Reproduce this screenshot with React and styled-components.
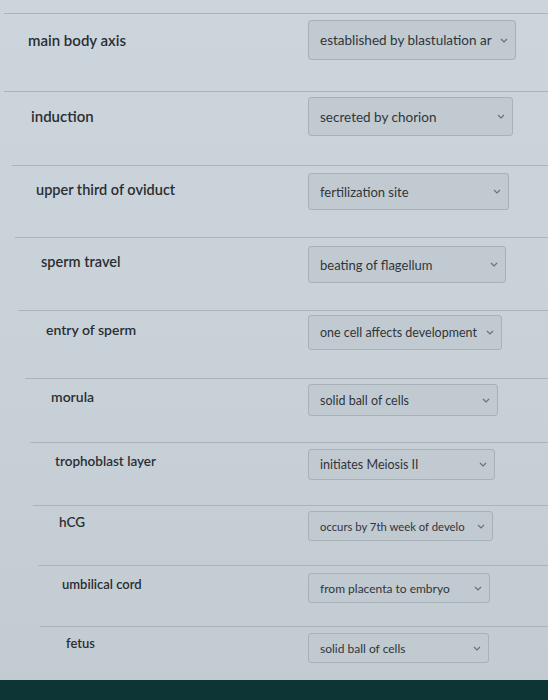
import React from "react";
import styled, { createGlobalStyle } from "styled-components";

const Global = createGlobalStyle`
  body {
    margin: 0;
    background: #c9d2d9;
    font-family: Lato, "Open Sans", sans-serif;
  }
`;

const Page = styled.div`
  width: 548px;
  height: 700px;
  overflow: hidden;
  display: flex;
  flex-direction: column;
  background: linear-gradient(180deg, #ccd5dc 0%, #c8d1d8 55%, #c3cbd1 100%);
`;

const TopStrip = styled.div`
  height: 13px;
  flex: none;
`;

const Row = styled.div`
  flex: none;
  height: ${p => p.h}px;
  margin-left: ${p => p.start}px;
  border-top: 1px solid #abb4bb;
  box-sizing: border-box;
  display: grid;
  grid-template-columns: ${p => 308 - p.start}px auto;
  align-items: start;
`;

const Label = styled.div`
  padding-left: ${p => p.indent}px;
  padding-top: ${p => p.top}px;
  font-size: ${p => p.size}px;
  font-weight: 600;
  color: #2a2e33;
  line-height: 18px;
  white-space: nowrap;
`;

const Select = styled.div`
  margin-top: ${p => p.top}px;
  width: ${p => p.w}px;
  height: ${p => p.hh}px;
  box-sizing: border-box;
  background: #c1cad1;
  border: 1px solid #a8b1b8;
  border-radius: 3px;
  display: flex;
  align-items: center;
  padding: 0 7px 0 11px;
  gap: 6px;
`;

const Value = styled.span`
  flex: 1;
  font-size: ${p => p.size}px;
  color: #30353a;
  white-space: nowrap;
  overflow: hidden;
`;

const Chevron = () => (
  <svg width="8" height="5" viewBox="0 0 8 5">
    <path d="M1 1l3 3 3-3" fill="none" stroke="#6a7279" strokeWidth="1.2" />
  </svg>
);

const Footer = styled.div`
  flex: 1;
  background: #0e3536;
`;

const rows = [
  { line: 13, next: 91, start: 4, lx: 28, cy: 40, size: 15, st: 20, sb: 60, sr: 516, vs: 13.5, label: "main body axis", value: "established by blastulation ar" },
  { line: 91, next: 165, start: 4, lx: 31, cy: 116, size: 15, st: 97, sb: 136, sr: 513, vs: 13.5, label: "induction", value: "secreted by chorion" },
  { line: 165, next: 237, start: 12, lx: 36, cy: 190, size: 14.5, st: 173, sb: 210, sr: 509, vs: 13, label: "upper third of oviduct", value: "fertilization site" },
  { line: 237, next: 310, start: 15, lx: 41, cy: 262, size: 14.5, st: 246, sb: 283, sr: 506, vs: 13, label: "sperm travel", value: "beating of flagellum" },
  { line: 310, next: 378, start: 18, lx: 46, cy: 330, size: 14, st: 315, sb: 350, sr: 502, vs: 12.5, label: "entry of sperm", value: "one cell affects development" },
  { line: 378, next: 442, start: 25, lx: 51, cy: 397, size: 14, st: 384, sb: 416, sr: 498, vs: 12.5, label: "morula", value: "solid ball of cells" },
  { line: 442, next: 505, start: 30, lx: 55, cy: 461, size: 13.5, st: 449, sb: 480, sr: 495, vs: 12.5, label: "trophoblast layer", value: "initiates Meiosis II" },
  { line: 505, next: 565, start: 33, lx: 59, cy: 522, size: 13.5, st: 511, sb: 541, sr: 493, vs: 11.3, label: "hCG", value: "occurs by 7th week of develo" },
  { line: 565, next: 626, start: 38, lx: 62, cy: 584, size: 13, st: 573, sb: 603, sr: 490, vs: 12, label: "umbilical cord", value: "from placenta to embryo" },
  { line: 626, next: 680, start: 40, lx: 66, cy: 643, size: 13, st: 633, sb: 663, sr: 489, vs: 12, label: "fetus", value: "solid ball of cells" },
];

export default function App() {
  return (
    <>
      <Global />
      <Page>
        <TopStrip />
        {rows.map(r => (
          <Row key={r.label} h={r.next - r.line} start={r.start}>
            <Label indent={r.lx - r.start} top={r.cy - r.line - 10} size={r.size}>
              {r.label}
            </Label>
            <Select top={r.st - r.line - 1} w={r.sr - 308} hh={r.sb - r.st}>
              <Value size={r.vs}>{r.value}</Value>
              <Chevron />
            </Select>
          </Row>
        ))}
        <Footer />
      </Page>
    </>
  );
}
